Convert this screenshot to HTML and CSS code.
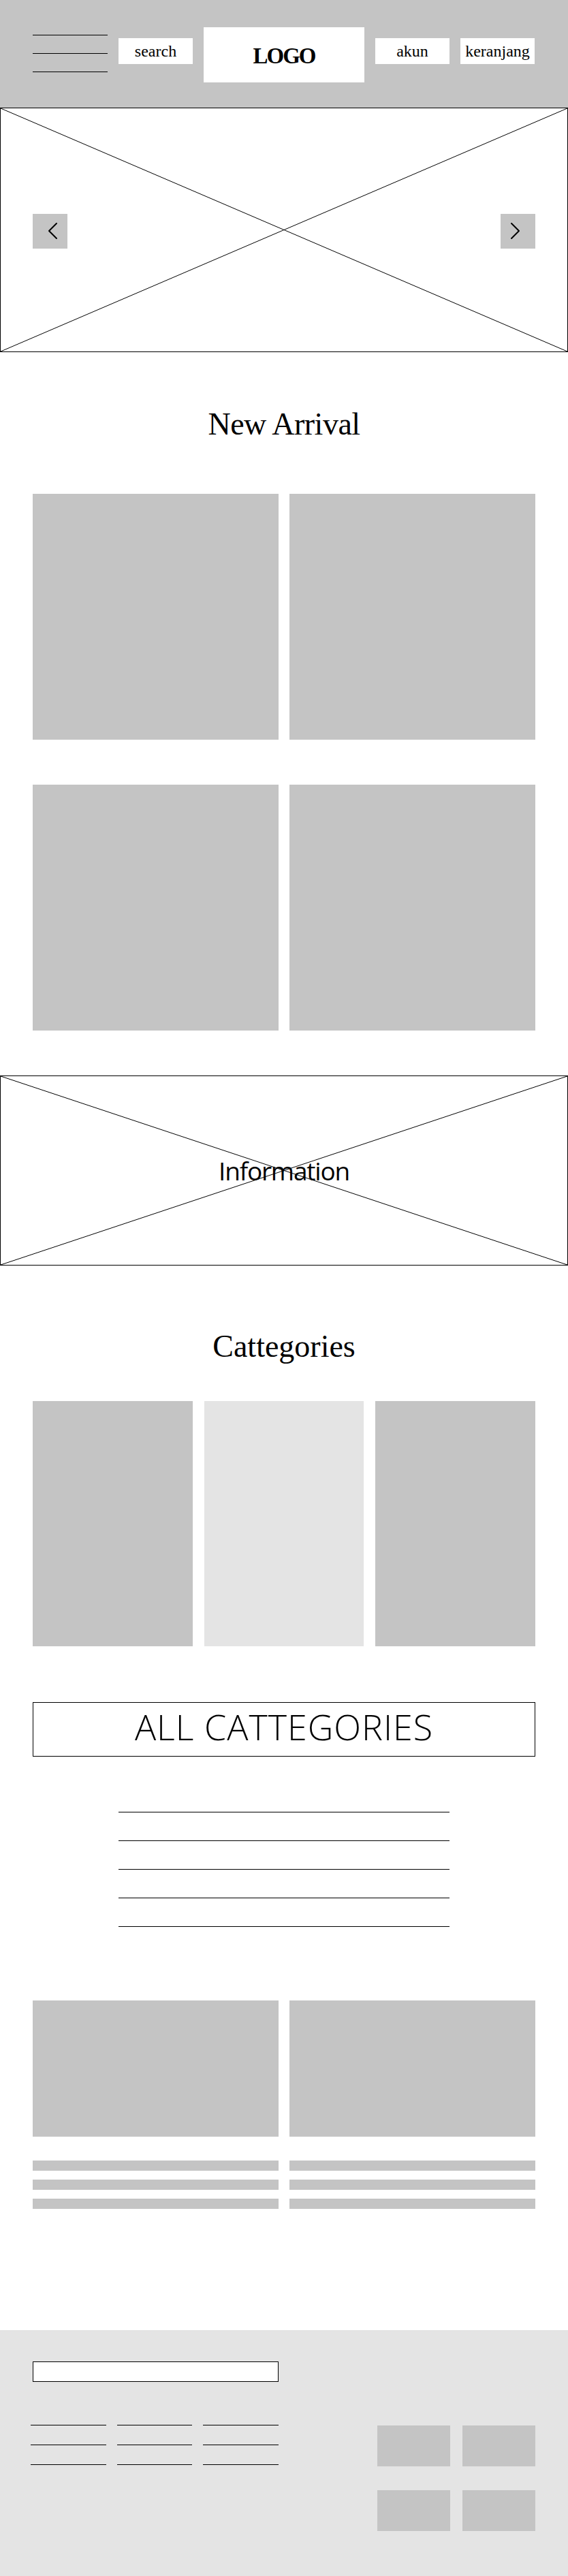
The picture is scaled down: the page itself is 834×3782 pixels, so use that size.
FILE: index.html
```html
<!DOCTYPE html>
<html lang="en">
<head>
    <meta charset="UTF-8">
    <meta name="viewport" content="width=device-width, initial-scale=1.0">
    <title>Wireframe Toko</title>
    <link rel="stylesheet" href="styles.css">
</head>
<body>
    <header class="top-bar">
        <div class="menu-icon">
            <span></span>
            <span></span>
            <span></span>
        </div>
        <div class="nav-box">search</div>
        <div class="logo">LOGO</div>
        <div class="nav-box">akun</div>
        <div class="nav-box">keranjang</div>
    </header>

    <!-- slider -->
    <section class="hero">
        <svg class="cross" width="100%" height="100%">
            <line x1="0" y1="0" x2="100%" y2="100%"></line>
            <line x1="100%" y1="0" x2="0" y2="100%"></line>
        </svg>
        <button class="arrow">
            <svg width="51" height="51" viewBox="0 0 51 51"><polyline points="35,14 24,25 35,36"></polyline></svg>
        </button>
        <button class="arrow">
            <svg width="51" height="51" viewBox="0 0 51 51"><polyline points="16,14 27,25 16,36"></polyline></svg>
        </button>
    </section>

    <h2 class="section-title first">New Arrival</h2>

    <div class="product-grid">
        <div class="product"></div>
        <div class="product"></div>
        <div class="product"></div>
        <div class="product"></div>
    </div>

    <section class="info-banner">
        <svg class="cross" width="100%" height="100%">
            <line x1="0" y1="0" x2="100%" y2="100%"></line>
            <line x1="100%" y1="0" x2="0" y2="100%"></line>
        </svg>
        <span class="info-text">Information</span>
    </section>

    <h2 class="section-title">Cattegories</h2>

    <div class="category-grid">
        <div class="category"></div>
        <div class="category light"></div>
        <div class="category"></div>
    </div>

    <div class="all-categories">ALL CATTEGORIES</div>

    <div class="category-list">
        <span></span>
        <span></span>
        <span></span>
        <span></span>
        <span></span>
    </div>

    <div class="item-grid">
        <div class="item">
            <div class="item-img"></div>
            <div class="bar"></div>
            <div class="bar"></div>
            <div class="bar"></div>
        </div>
        <div class="item">
            <div class="item-img"></div>
            <div class="bar"></div>
            <div class="bar"></div>
            <div class="bar"></div>
        </div>
    </div>

    <footer class="footer">
        <div class="footer-left">
            <input type="text" class="subscribe">
            <div class="footer-links">
                <div class="link-col"><span></span><span></span><span></span></div>
                <div class="link-col"><span></span><span></span><span></span></div>
                <div class="link-col"><span></span><span></span><span></span></div>
            </div>
        </div>
        <div class="footer-icons">
            <div class="icon-box"></div>
            <div class="icon-box"></div>
            <div class="icon-box"></div>
            <div class="icon-box"></div>
        </div>
    </footer>
</body>
</html>
```

FILE: styles.css
```css
body {
    margin: 0;
    font-family: "Liberation Serif", serif;
    color: #000;
    background: #fff;
}

/* header */
.top-bar {
    background: #c4c4c4;
    height: 158px;
    box-sizing: border-box;
    padding: 40px 48px 0;
    display: flex;
    align-items: flex-start;
    gap: 16px;
}

.menu-icon {
    width: 110px;
    margin-top: 11px;
    display: flex;
    flex-direction: column;
    gap: 26px;
}

.menu-icon span {
    display: block;
    height: 1px;
    background: #000;
}

.nav-box {
    width: 109px;
    height: 38px;
    margin-top: 16px;
    background: #fff;
    display: flex;
    align-items: center;
    justify-content: center;
    font-size: 24px;
}

.logo {
    width: 236px;
    height: 81px;
    background: #fff;
    display: flex;
    align-items: center;
    justify-content: center;
    padding-top: 3px;
    box-sizing: border-box;
    font-size: 33px;
    font-weight: bold;
    letter-spacing: -2px;
}

/* slider + banner */
.hero {
    position: relative;
    height: 359px;
    box-sizing: border-box;
    border: 1px solid #000;
    display: flex;
    justify-content: space-between;
    align-items: center;
    padding: 4px 47px 0;
}

.cross {
    position: absolute;
    top: 0;
    left: 0;
}

.cross line {
    stroke: #000;
    stroke-width: 1;
}

.arrow {
    position: relative;
    width: 51px;
    height: 51px;
    padding: 0;
    border: none;
    background: #c4c4c4;
}

.arrow svg {
    display: block;
}

.arrow polyline {
    fill: none;
    stroke: #000;
    stroke-width: 2;
    stroke-linecap: round;
    stroke-linejoin: round;
}

.section-title {
    margin: 96px 0 57px;
    font-size: 46px;
    line-height: 46px;
    font-weight: normal;
    text-align: center;
}

.section-title.first {
    margin: 83px 0 79px;
    letter-spacing: -0.5px;
}

.product-grid {
    display: grid;
    grid-template-columns: 1fr 1fr;
    gap: 66px 16px;
    padding: 0 48px;
}

.product {
    height: 361px;
    background: #c4c4c4;
}

.info-banner {
    position: relative;
    margin-top: 66px;
    height: 279px;
    box-sizing: border-box;
    border: 1px solid #000;
    display: flex;
    align-items: center;
    justify-content: center;
}

.info-text {
    position: relative;
    font-family: "Open Sans", sans-serif;
    font-size: 37px;
    letter-spacing: -1.2px;
}

/* categories */
.category-grid {
    display: grid;
    grid-template-columns: repeat(3, 1fr);
    gap: 17px;
    padding: 0 48px;
}

.category {
    height: 360px;
    background: #c4c4c4;
}

.category.light {
    background: #e4e4e4;
}

.all-categories {
    margin: 82px 48px 0;
    height: 80px;
    box-sizing: border-box;
    border: 1px solid #000;
    display: flex;
    align-items: center;
    justify-content: center;
    padding-bottom: 8px;
    font-family: "Open Sans", sans-serif;
    font-weight: 300;
    font-size: 52px;
    line-height: 52px;
    letter-spacing: 1px;
}

.category-list {
    width: 486px;
    margin: 81px auto 0;
    display: flex;
    flex-direction: column;
    gap: 41px;
}

.category-list span {
    display: block;
    height: 1px;
    background: #000;
}

.item-grid {
    margin-top: 108px;
    display: grid;
    grid-template-columns: 1fr 1fr;
    gap: 16px;
    padding: 0 48px;
}

.item {
    display: flex;
    flex-direction: column;
    gap: 13px;
}

.item-img {
    height: 200px;
    background: #c4c4c4;
    margin-bottom: 22px;
}

.bar {
    height: 15px;
    background: #c4c4c4;
}

/* footer */
.footer {
    margin-top: 178px;
    height: 361px;
    box-sizing: border-box;
    background: #e4e4e4;
    padding: 46px 48px 0;
    display: flex;
    justify-content: space-between;
    align-items: flex-start;
}

.footer-left {
    width: 361px;
}

.subscribe {
    display: block;
    width: 361px;
    height: 30px;
    box-sizing: border-box;
    border: 1px solid #000;
    background: #fff;
    padding: 0 8px;
    margin: 0;
}

.footer-links {
    margin: 63px 0 0 -3px;
    width: 364px;
    display: grid;
    grid-template-columns: repeat(3, 1fr);
    gap: 16px;
}

.link-col {
    display: flex;
    flex-direction: column;
    gap: 28px;
}

.link-col span {
    display: block;
    height: 1px;
    background: #000;
}

.footer-icons {
    margin-top: 94px;
    display: grid;
    grid-template-columns: 107px 107px;
    gap: 35px 18px;
}

.icon-box {
    height: 60px;
    background: #c4c4c4;
}
```
